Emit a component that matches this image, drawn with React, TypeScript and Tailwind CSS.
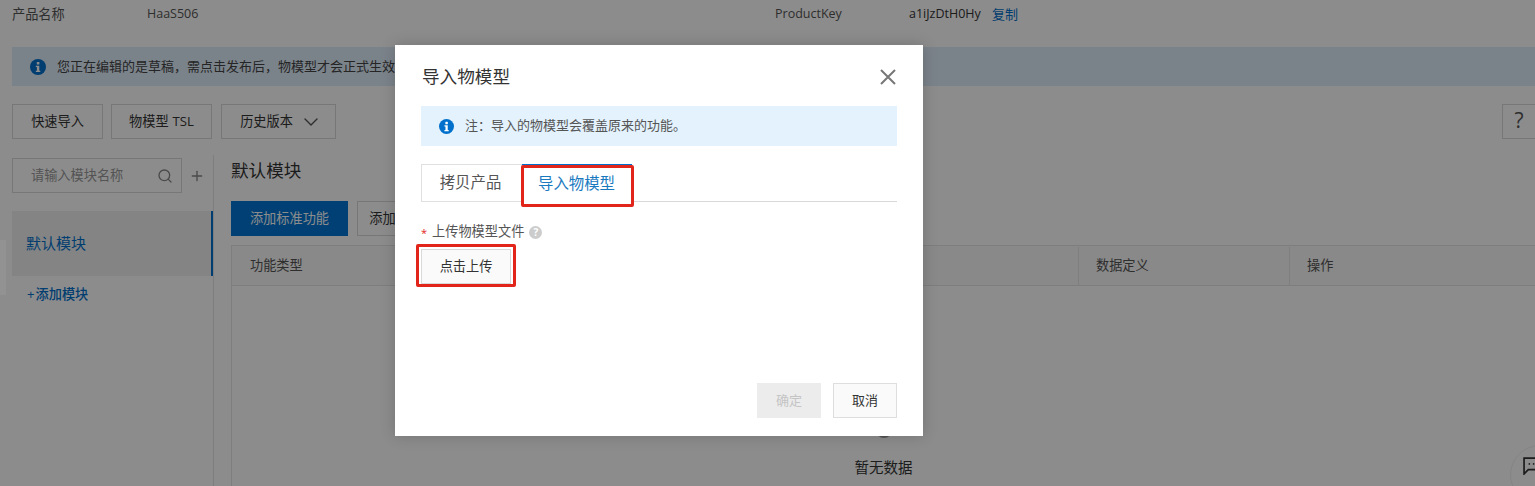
import React from 'react';
import { ChevronDown, Plus, Search } from 'lucide-react';

const FONT = "font-['Open_Sans','Noto_Sans_CJK_SC',sans-serif]";

const InfoIcon = ({ className }: { className: string }) => (
  <svg className={className} viewBox="0 0 16 16">
    <circle cx="8" cy="8" r="8" fill="#0070cc" />
    <rect x="6.8" y="3" width="2.6" height="2.6" rx="0.6" fill="#fff" />
    <path d="M5.8 6.7h3.5v5h1v1.4H5.8v-1.4h1.1V8.1H5.8z" fill="#fff" />
  </svg>
);

const OutlineButton = ({ className, children }: { className: string; children: React.ReactNode }) => (
  <button className={`flex h-[35px] items-center justify-center border border-[#d9d9d9] bg-white text-[13.2px] text-[#333] ${className}`}>
    {children}
  </button>
);

const Page = () => (
  <div className="flex h-[486px] flex-col bg-white text-[#333]">
    <div className="flex h-[29px] items-center pl-3 text-[12.5px] text-[#555]">
      <span className="w-[135px] text-[13.2px]">产品名称</span>
      <span className="w-[628px]">HaaS506</span>
      <span className="w-[134px]">ProductKey</span>
      <span className="w-[83px] text-[#333]">a1iJzDtH0Hy</span>
      <span className="text-[13px] text-[#0070cc]">复制</span>
    </div>

    <div className="mt-[18px] ml-3 flex h-[39px] items-center bg-[#e0eefc] pl-[18px] text-[13px] text-[#444]">
      <InfoIcon className="mr-[11px] h-4 w-4" />
      您正在编辑的是草稿，需点击发布后，物模型才会正式生效
    </div>

    <div className="mt-[18px] flex justify-between pl-3">
      <div className="flex">
        <OutlineButton className="w-[91px]">快速导入</OutlineButton>
        <OutlineButton className="ml-2 w-[101px]">
          物模型<span className="ml-1">TSL</span>
        </OutlineButton>
        <OutlineButton className="ml-[9px] w-[115px]">
          历史版本
          <ChevronDown className="-mr-[6px] ml-[6px] h-6 w-6 text-[#555]" strokeWidth={1.4} />
        </OutlineButton>
      </div>
      <OutlineButton className="w-[33px] border-r-0 pb-[2px] text-[21px] text-[#555]">?</OutlineButton>
    </div>

    <div className="flex min-h-0 flex-1 pt-[16px]">
      <aside className="ml-3 w-[202px] border-r border-[#e5e5e5]">
        <div className="mt-[3px] flex items-center">
          <div className="flex h-[35px] w-[170px] items-center justify-between border border-[#d9d9d9] pr-[8px] pl-[18px] text-[13.2px] text-[#999]">
            请输入模块名称
            <Search className="h-4 w-4 text-[#888]" strokeWidth={2} />
          </div>
          <Plus className="ml-[7px] h-4 w-4 text-[#888]" strokeWidth={2} />
        </div>
        <div className="mt-[18px] flex h-[65px] items-center border-r-2 border-[#0070cc] bg-[#f0f0f0] pl-[14px] text-[15px] text-[#0070cc]">
          默认模块
        </div>
        <div className="mt-[8px] flex items-center pl-[15px] text-[13.2px] font-medium leading-[20px] text-[#0070cc]">
          <span className="mr-[1px]">+</span>添加模块
        </div>
      </aside>

      <main className="ml-[17px] flex min-w-0 flex-1 flex-col">
        <h2 className="mt-[3px] text-[17.6px] leading-[24px] font-normal text-[#333]">默认模块</h2>
        <div className="mt-[19px] flex">
          <button className="h-[35px] w-[117px] bg-[#0075d5] text-[13.2px] text-white">添加标准功能</button>
          <OutlineButton className="ml-[9px] w-[117px]">添加自定义功能</OutlineButton>
        </div>
        <div className="mt-[9px] flex flex-1 flex-col border-l border-[#e5e5e5]">
          <div className="flex h-[41px] items-center border-y border-[#e5e5e5] bg-[#fafafa] pt-[1px] text-[13.2px] text-[#555]">
            <span className="w-[846px] pl-[18px]">功能类型</span>
            <span className="flex h-full w-[211px] items-center border-l border-[#e5e5e5] pl-[17px]">数据定义</span>
            <span className="flex h-full items-center border-l border-[#e5e5e5] pl-[17px]">操作</span>
          </div>
          <div className="flex flex-col items-center pt-[136px]">
            <div className="h-[16px] w-[16px] rounded-full bg-[#999]" />
            <span className="mt-[19px] text-[14.5px] text-[#333]">暂无数据</span>
          </div>
        </div>
      </main>
    </div>
  </div>
);

const ImportDialog = () => (
  <div className="flex h-[391px] w-[528px] flex-col bg-white px-[26px] pt-[20px] pb-[18px] shadow-[0_0_14px_rgba(0,0,0,0.18)]">
    <div className="flex h-[24px] items-center justify-between">
      <h1 className="-mt-[2px] ml-[1px] text-[17.6px] font-normal text-[#333]">导入物模型</h1>
      <svg className="-mt-[1px] mr-[1px] h-[16px] w-[16px]" viewBox="0 0 16 16" fill="none" stroke="#777" strokeWidth="2">
        <path d="M1 1l14 14M15 1L1 15" />
      </svg>
    </div>

    <div className="mt-[17px] flex h-[40px] items-center bg-[#e3f2fd] pl-[18px] text-[13px] text-[#555]">
      <InfoIcon className="mr-[11px] h-[15px] w-[15px]" />
      注：导入的物模型会覆盖原来的功能。
    </div>

    <div className="mt-[18px] flex h-[38px] border-b border-[#d9d9d9] text-[15.4px]">
      <div className="flex h-[38px] w-[101px] items-center justify-center border border-[#e0e0e0] pr-[2px] text-[#555]">拷贝产品</div>
      <div className="relative flex h-[38px] w-[110px] items-center justify-center border-t border-[#0070cc] bg-white pr-[1px] text-[#1a7ac0]">
        导入物模型
        <div className="absolute top-0 -right-[2px] -bottom-[5px] -left-[1px] rounded-[2px] border-[3px] border-[#e1251b]" />
      </div>
    </div>

    <div className="mt-[21px] flex h-[18px] items-center text-[13.2px] text-[#555]">
      <span className="mr-[5px] text-[11px] leading-none text-[#e1251b]">*</span>
      上传物模型文件
      <span className="ml-[5px] flex h-[13px] w-[13px] items-center justify-center rounded-full bg-[#ccc] text-[10px] font-bold text-white">?</span>
    </div>

    <div className="relative mt-[8px] h-[35px] w-[90px]">
      <button className="h-full w-full border border-[#d9d9d9] bg-[#fafafa] text-[13.2px] text-[#333]">点击上传</button>
      <div className="absolute -inset-x-[5px] -top-[5px] -bottom-[3px] rounded-[2px] border-[3px] border-[#e1251b]" />
    </div>

    <div className="mt-auto flex justify-end">
      <button className="h-[35px] w-[64px] bg-[#ececec] text-[13px] text-[#c4c4c4]">确定</button>
      <button className="ml-3 h-[35px] w-[64px] border border-[#dedede] bg-[#fafafa] text-[13px] text-[#333]">取消</button>
    </div>
  </div>
);

export default function App() {
  return (
    <div className={`relative h-[486px] overflow-hidden ${FONT}`}>
      <Page />
      <div className="absolute top-[445px] left-[1510px] flex h-[60px] w-[60px] items-start rounded-full border border-[#f0f0f0] bg-white pt-[11px] pl-[12px]">
        <svg className="h-[18px] w-[18px]" viewBox="0 0 17 17" fill="none" stroke="#333" strokeWidth="1.6">
          <path d="M1 1h15v11H5l-4 4z" />
          <circle cx="6" cy="6.5" r="0.8" fill="#333" stroke="none" />
          <circle cx="10" cy="6.5" r="0.8" fill="#333" stroke="none" />
        </svg>
      </div>
      <div className="absolute inset-0 bg-black/45 pt-[45px] pl-[395px]">
        <ImportDialog />
      </div>
      <div className="absolute top-[240px] left-0 h-[55px] w-[6px] bg-white/5" />
    </div>
  );
}
